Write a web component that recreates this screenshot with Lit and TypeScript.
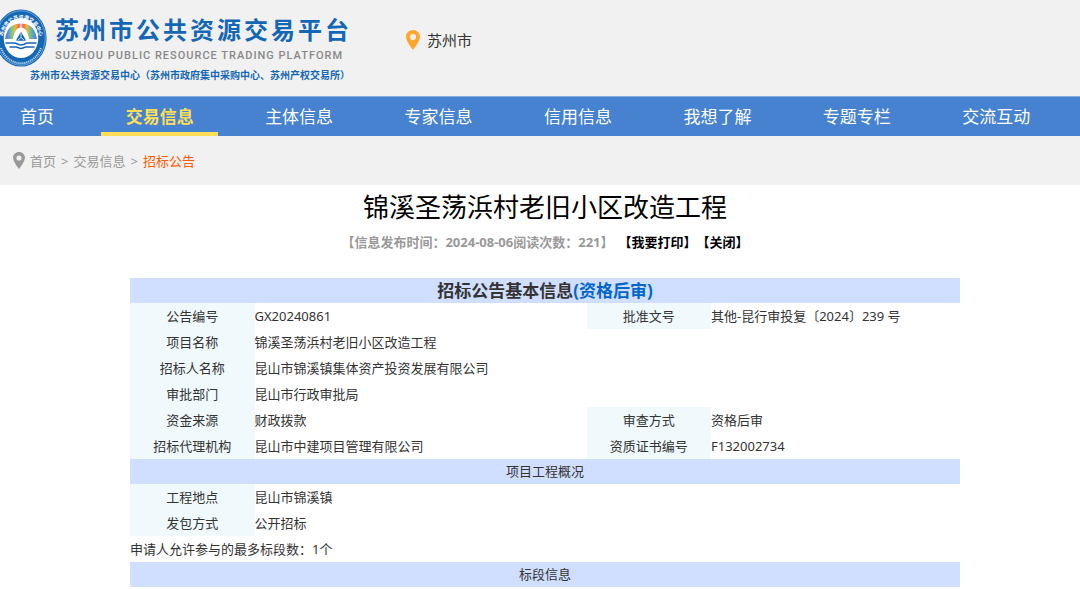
import { LitElement, html, svg, css, nothing } from "lit";
import { customElement } from "lit/decorators.js";

const pin = svg`<path fill-rule="evenodd" d="M7 0C3.1 0 0 3 0 6.8 0 11.6 7 20 7 20s7-8.4 7-13.2C14 3 10.900 0 7 0Zm0 4a3 3 0 1 1 0 6 3 3 0 0 1 0-6Z"/>`;

const sections = ["主体信息", "专家信息", "信用信息", "我想了解", "专题专栏", "交流互动"];

type Row = [string, string, string?, string?];

const basics: Row[] = [
  ["公告编号", "GX20240861", "批准文号", "其他-昆行审投复〔2024〕239 号"],
  ["项目名称", "锦溪圣荡浜村老旧小区改造工程"],
  ["招标人名称", "昆山市锦溪镇集体资产投资发展有限公司"],
  ["审批部门", "昆山市行政审批局"],
  ["资金来源", "财政拨款", "审查方式", "资格后审"],
  ["招标代理机构", "昆山市中建项目管理有限公司", "资质证书编号", "F132002734"],
];

const overview: Row[] = [
  ["工程地点", "昆山市锦溪镇"],
  ["发包方式", "公开招标"],
];

@customElement("site-emblem")
class SiteEmblem extends LitElement {
  static styles = css`
    :host { display: block; }
    .emblem { display: block; }
    .ring { font-family: "Noto Sans CJK SC", sans-serif; font-size: 5px; font-weight: 700; fill: #fff; text-anchor: middle; }
  `;
  render() {
    return html`<svg class="emblem" width="47" height="58" viewBox="0 0 47 58" aria-hidden="true">
      <defs>
        <linearGradient id="rainbow" x1="0" x2="1">
          <stop offset="0" stop-color="#7764b4" /><stop offset=".12" stop-color="#5b9cdc" />
          <stop offset=".24" stop-color="#8fcf6a" /><stop offset=".34" stop-color="#f3b13b" />
          <stop offset=".44" stop-color="#ee6050" /><stop offset=".5" stop-color="#fbd9d0" />
          <stop offset=".56" stop-color="#ee6050" /><stop offset=".68" stop-color="#f5b541" />
          <stop offset=".78" stop-color="#78c276" /><stop offset=".9" stop-color="#4a9cdc" />
          <stop offset="1" stop-color="#7764b4" />
        </linearGradient>
        <path id="top" d="M2.500 31A18.500 21.500 0 1 1 39.500 31" />
      </defs>
      <ellipse cx="21" cy="29" rx="25.600" ry="28.600" fill="#1467b5" />
      <ellipse cx="21" cy="29" rx="24.300" ry="27.200" fill="none" stroke="#8dbce3" stroke-width=".7" />
      <ellipse cx="21" cy="29" rx="17.300" ry="20" fill="#fff" />
      <text class="ring"><textPath href="#top" startOffset="50%">苏州市公共资源交易中心</textPath></text>
      <path d="M1 39A21.500 24 0 0 0 41 39" fill="none" stroke="#b9d6ef" stroke-width="2" stroke-dasharray="1.200 .8" />
      <path d="M5 30C7 18 13 14.500 21 14.500S35 18 37 30H29C28 23 25.500 19 21 18.500 16.500 19 14 23 13 30Z" fill="url(#rainbow)" />
      <path d="M21 24 25 31H17Z" fill="#1467b5" stroke="#1467b5" stroke-width="1.500" stroke-linejoin="round" />
      <path d="M21 24v4.500l-3 2.500M21 28.500l3 2.500" stroke="#fff" stroke-width=".8" fill="none" />
      <path d="M6 34h8c3 0 4 2 7 2s4-2 7-2h8M10 38h6c2 0 3 1.500 5 1.500s3-1.500 5-1.500h8" fill="none" stroke="#1467b5" stroke-width="1.500" stroke-linecap="round" />
    </svg>`;
  }
}

@customElement("app-root")
class AppRoot extends LitElement {
  static styles = css`
    :host {
      display: block;
      font-family: "Noto Sans", "Noto Sans CJK SC", sans-serif;
      font-size: 13px;
      color: #333;
      background: #fff;
    }
    a { color: inherit; text-decoration: none; }
    .header {
      display: flex;
      align-items: flex-start;
      height: 96px;
      box-sizing: border-box;
      padding-top: 9px;
      background: #f1f1f1;
    }
    .brand { display: grid; grid-template-columns: 55px auto; }
    .emblem { grid-area: 1 / 1; }
    .names { grid-area: 1 / 2; white-space: nowrap; color: #1467b5; }
    .name {
      margin: 0;
      padding-top: 6px;
      font-size: 24px;
      line-height: 30px;
      font-weight: 700;
      letter-spacing: 3px;
    }
    .latin { font-family: Roboto, sans-serif; font-size: 11px; font-weight: 500; line-height: 22px; letter-spacing: 1px; color: #888; }
    .center { grid-area: 2 / 1 / 3 / 3; justify-self: end; padding-right: 2px; white-space: nowrap; font-size: 10px; line-height: 16px; font-weight: 700; color: #1467b5; }
    .city { display: flex; align-items: center; gap: 7px; margin-left: 54px; padding-top: 20px; font-size: 15px; line-height: 22px; }
    .city-pin { fill: #fca729; }
    .nav {
      display: flex;
      gap: 22px;
      box-sizing: border-box;
      height: 40px;
      padding: 0 25px 0 20px;
      background: #4682cf;
      border-top: 1px solid #86addf;
      font-size: 17px;
      line-height: 40px;
      color: #fff;
      white-space: nowrap;
    }
    .home { flex: none; width: 59px; }
    .tab { flex: 1; text-align: center; }
    .active { box-sizing: border-box; height: 39px; border-bottom: 4px solid #ffde57; color: #ffde57; font-weight: 700; }
    .crumbs { display: flex; align-items: center; gap: 5px; height: 49px; padding-left: 13px; background: #f1f1f1; color: #999; }
    .crumb-pin { fill: #999; }
    .current { color: #ff5a00; }
    .notice { padding: 0 120px 0 130px; }
    .title { margin: 0; padding-top: 2px; font-size: 26px; line-height: 40px; font-weight: 400; text-align: center; color: #000; }
    .meta { display: flex; justify-content: center; gap: 5px; line-height: 30px; font-weight: 700; color: #999; white-space: nowrap; }
    .action { padding: 0; border: 0; background: none; font: inherit; color: #000; cursor: pointer; }
    .actions { display: flex; }
    .info { width: 100%; margin-top: 21px; border-collapse: collapse; table-layout: fixed; line-height: 26px; }
    .info th, .info td { padding: 0; font-weight: 400; text-align: left; white-space: nowrap; }
    .info .label { background: #f0f9fb; text-align: center; }
    .info .band { background: #d0deff; text-align: center; line-height: 25px; }
    .info .lead { font-size: 17px; font-weight: 700; }
    .c15 { width: 15%; }
    .c40 { width: 40%; }
    .review { color: #0066cc; }
  `;

  private row([label, value, label2, value2]: Row) {
    return html`<tr>
      <th class="label" scope="row">${label}</th>
      <td colspan=${label2 ? 1 : 3}>${value}</td>
      ${label2 ? html`<th class="label" scope="row">${label2}</th><td>${value2}</td>` : nothing}
    </tr>`;
  }

  render() {
    return html`
      <header class="header">
        <div class="brand">
          <site-emblem class="emblem"></site-emblem>
          <div class="names">
            <div class="name">苏州市公共资源交易平台</div>
            <div class="latin">SUZHOU PUBLIC RESOURCE TRADING PLATFORM</div>
          </div>
          <div class="center">苏州市公共资源交易中心（苏州市政府集中采购中心、苏州产权交易所）</div>
        </div>
        <a class="city" href="#">
          <svg class="city-pin" width="14" height="20" viewBox="0 0 14 20" aria-hidden="true">${pin}</svg>苏州市
        </a>
      </header>
      <nav class="nav">
        <a class="home" href="#">首页</a>
        <a class="tab active" href="#" aria-current="page">交易信息</a>
        ${sections.map((s) => html`<a class="tab" href="#">${s}</a>`)}
      </nav>
      <nav class="crumbs" aria-label="breadcrumb">
        <svg class="crumb-pin" width="12" height="17" viewBox="0 0 14 20" aria-hidden="true">${pin}</svg>
        <a href="#">首页</a><span>&gt;</span><a href="#">交易信息</a><span>&gt;</span><a class="current" href="#">招标公告</a>
      </nav>
      <main class="notice">
        <h1 class="title">锦溪圣荡浜村老旧小区改造工程</h1>
        <div class="meta">
          <span>【信息发布时间：2024-08-06阅读次数：221】</span>
          <span class="actions"><button class="action">【我要打印】</button><button class="action">【关闭】</button></span>
        </div>
        <table class="info">
          <colgroup><col class="c15" /><col class="c40" /><col class="c15" /><col /></colgroup>
          <tbody>
            <tr><th class="band lead" colspan="4">招标公告基本信息<span class="review">(资格后审)</span></th></tr>
            ${basics.map((r) => this.row(r))}
            <tr><th class="band" colspan="4">项目工程概况</th></tr>
            ${overview.map((r) => this.row(r))}
            <tr><td colspan="4">申请人允许参与的最多标段数：1个</td></tr>
            <tr><th class="band" colspan="4">标段信息</th></tr>
          </tbody>
        </table>
      </main>
    `;
  }
}
